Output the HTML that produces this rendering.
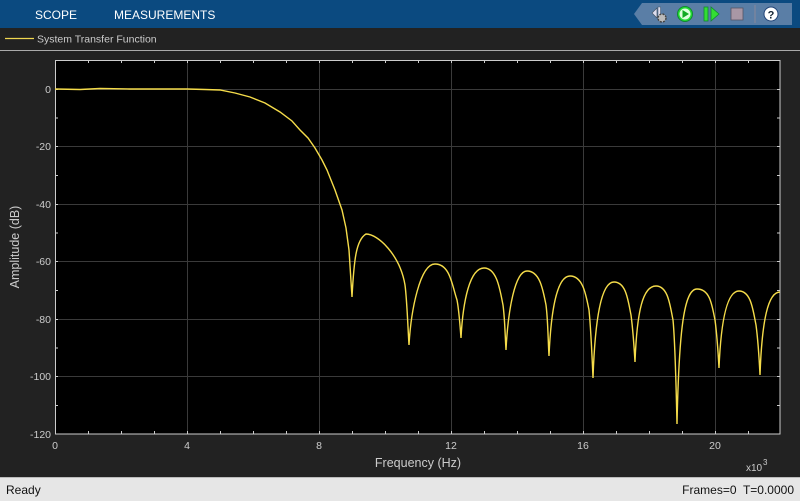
<!DOCTYPE html>
<html><head><style>
body{margin:0;width:800px;height:500px;overflow:hidden;background:#222;font-family:"Liberation Sans",sans-serif;position:relative}
.top{position:absolute;left:0;top:0;width:800px;height:28px;background:#0b4a80}
.top span{position:absolute;top:8px;color:#fff;font-size:12px}
.status{position:absolute;left:0;top:477px;width:800px;height:23px;background:#e6e6e6;border-top:1px solid #bbb;font-size:12px;color:#111}
</style></head><body>
<div class="top">
<span style="left:35px">SCOPE</span><span style="left:114px">MEASUREMENTS</span>
<svg style="position:absolute;left:634px;top:3px" width="158" height="22">
<polygon points="8,0 158,0 158,22 8,22 0,11" fill="#5a7ea6"/>
<polygon points="23,5 18,10 23,15" fill="#dde" stroke="#456" stroke-width="0.7"/>
<rect x="24" y="4" width="2.5" height="12" fill="#dde" stroke="#456" stroke-width="0.5"/>
<circle cx="28" cy="15" r="4" fill="#bbb" stroke="#444" stroke-width="1.5" stroke-dasharray="2 1.2"/>
<circle cx="51" cy="11" r="7.5" fill="#2d3" stroke="#183" stroke-width="1"/>
<circle cx="51" cy="11" r="5.5" fill="#dfd"/>
<polygon points="48.5,7 48.5,15 55,11" fill="#1a2"/>
<rect x="70" y="4" width="4" height="14" fill="#3d3" stroke="#183" stroke-width="0.8"/>
<polygon points="77,4 77,18 85,11" fill="#3d3" stroke="#183" stroke-width="0.8"/>
<rect x="97" y="5" width="12" height="12" fill="#a897a5" stroke="#556" stroke-width="0.8"/>
<line x1="121" y1="2" x2="121" y2="20" stroke="#889" />
<circle cx="137" cy="11" r="7" fill="#fff" stroke="#247" stroke-width="1"/>
<text x="137" y="15.5" text-anchor="middle" font-size="11" font-weight="bold" fill="#123" font-family="Liberation Sans">?</text>
</svg>
</div>
<svg style="position:absolute;left:0;top:28px" width="800" height="449">
<line x1="5" y1="10.5" x2="34" y2="10.5" stroke="#f0d850" stroke-width="1.2"/>
<text x="37" y="14.5" fill="#ccc" font-size="10.5" font-family="Liberation Sans">System Transfer Function</text>
<line x1="0" y1="22.5" x2="800" y2="22.5" stroke="#aaa"/>
</svg>
<svg style="position:absolute;left:0;top:0" width="800" height="477">
<rect x="55" y="60" width="725" height="374" fill="#000"/>
<g stroke="#3a3a3a" stroke-width="1">
<line x1="187.5" y1="60" x2="187.5" y2="434"/><line x1="319.5" y1="60" x2="319.5" y2="434"/><line x1="451.5" y1="60" x2="451.5" y2="434"/><line x1="583.5" y1="60" x2="583.5" y2="434"/><line x1="715.5" y1="60" x2="715.5" y2="434"/>
<line x1="55" y1="89.5" x2="780" y2="89.5"/><line x1="55" y1="146.5" x2="780" y2="146.5"/><line x1="55" y1="204.5" x2="780" y2="204.5"/><line x1="55" y1="261.5" x2="780" y2="261.5"/><line x1="55" y1="319.5" x2="780" y2="319.5"/><line x1="55" y1="376.5" x2="780" y2="376.5"/>
</g>
<g stroke="#ccc" stroke-width="1">
<rect x="55.5" y="60.5" width="724.5" height="373.5" fill="none"/>
<path d="M88.5,60v3M121.5,60v3M154.5,60v3M187.5,60v3M220.5,60v3M253.5,60v3M286.5,60v3M319.5,60v3M352.5,60v3M385.5,60v3M418.5,60v3M451.5,60v3M484.5,60v3M517.5,60v3M550.5,60v3M583.5,60v3M616.5,60v3M649.5,60v3M682.5,60v3M715.5,60v3M748.5,60v3
M88.5,434v-3M121.5,434v-3M154.5,434v-3M187.5,434v-3M220.5,434v-3M253.5,434v-3M286.5,434v-3M319.5,434v-3M352.5,434v-3M385.5,434v-3M418.5,434v-3M451.5,434v-3M484.5,434v-3M517.5,434v-3M550.5,434v-3M583.5,434v-3M616.5,434v-3M649.5,434v-3M682.5,434v-3M715.5,434v-3M748.5,434v-3
M55,89.5h3M55,118h3M55,146.5h3M55,175.5h3M55,204.5h3M55,233h3M55,261.5h3M55,290.5h3M55,319.5h3M55,348h3M55,376.5h3M55,405.5h3
M780,89.5h-3M780,118h-3M780,146.5h-3M780,175.5h-3M780,204.5h-3M780,233h-3M780,261.5h-3M780,290.5h-3M780,319.5h-3M780,348h-3M780,376.5h-3M780,405.5h-3"/>
</g>
<path fill="none" stroke="#f5dc4a" stroke-width="1.4" d="M55,89 L80,89.5 L100,88.5 L130,89 L160,89 L187,89 L205,89.5 L220,90 L235,93 L250,97 L265,103 L280,112 L292,121 L300,130 L308,138 L315,148 L322,160 L327,170 L335,190 L342,210 L346,228 L349,250 L352,297
C354,260 356,240 366,234 C378,234 400,255 405,285 C407,300 408,330 409,345
C411,310 420,264 435,264 C450,264 452,285 457,300 C459,310 460,325 461,338
C463,300 470,268 484,268 C497,268 500,290 503,305 C505,320 505,335 506,350
C508,310 515,271 527,271 C540,271 543,290 546,305 C548,320 548,340 549,356
C551,310 557,276 570,276 C583,276 586,295 589,310 C591,330 592,355 593,378
C595,320 601,282 614,282 C626,282 628,300 631,315 C633,330 634,345 635,362
C637,310 643,286 656,286 C668,286 670,305 673,320 C675,340 676,380 677,424
C679,330 684,289 697,289 C710,289 712,305 715,320 C717,335 718,350 719,368
C721,320 727,291 739,291 C751,291 753,310 756,325 C758,340 759,355 760,375
C762,320 768,292 780,292"/>
<g fill="#ccc" font-size="10.5" font-family="Liberation Sans" text-anchor="end">
<text x="51" y="93">0</text><text x="51" y="150">-20</text><text x="51" y="208">-40</text><text x="51" y="265">-60</text><text x="51" y="323">-80</text><text x="51" y="380">-100</text><text x="51" y="438">-120</text>
</g>
<g fill="#ccc" font-size="10.5" font-family="Liberation Sans" text-anchor="middle">
<text x="55" y="449">0</text><text x="187" y="449">4</text><text x="319" y="449">8</text><text x="451" y="449">12</text><text x="583" y="449">16</text><text x="715" y="449">20</text>
<text x="418" y="467" font-size="12.5">Frequency (Hz)</text>
<text transform="translate(19,247) rotate(-90)" font-size="12.5">Amplitude (dB)</text>
</g>
<text x="746" y="471" fill="#ccc" font-size="10" font-family="Liberation Sans">x10</text>
<text x="763" y="465" fill="#ccc" font-size="8" font-family="Liberation Sans">3</text>
</svg>
<div class="status"><span style="position:absolute;left:6px;top:5px">Ready</span><span style="position:absolute;right:6px;top:5px">Frames=0&nbsp; T=0.0000</span></div>
</body></html>
